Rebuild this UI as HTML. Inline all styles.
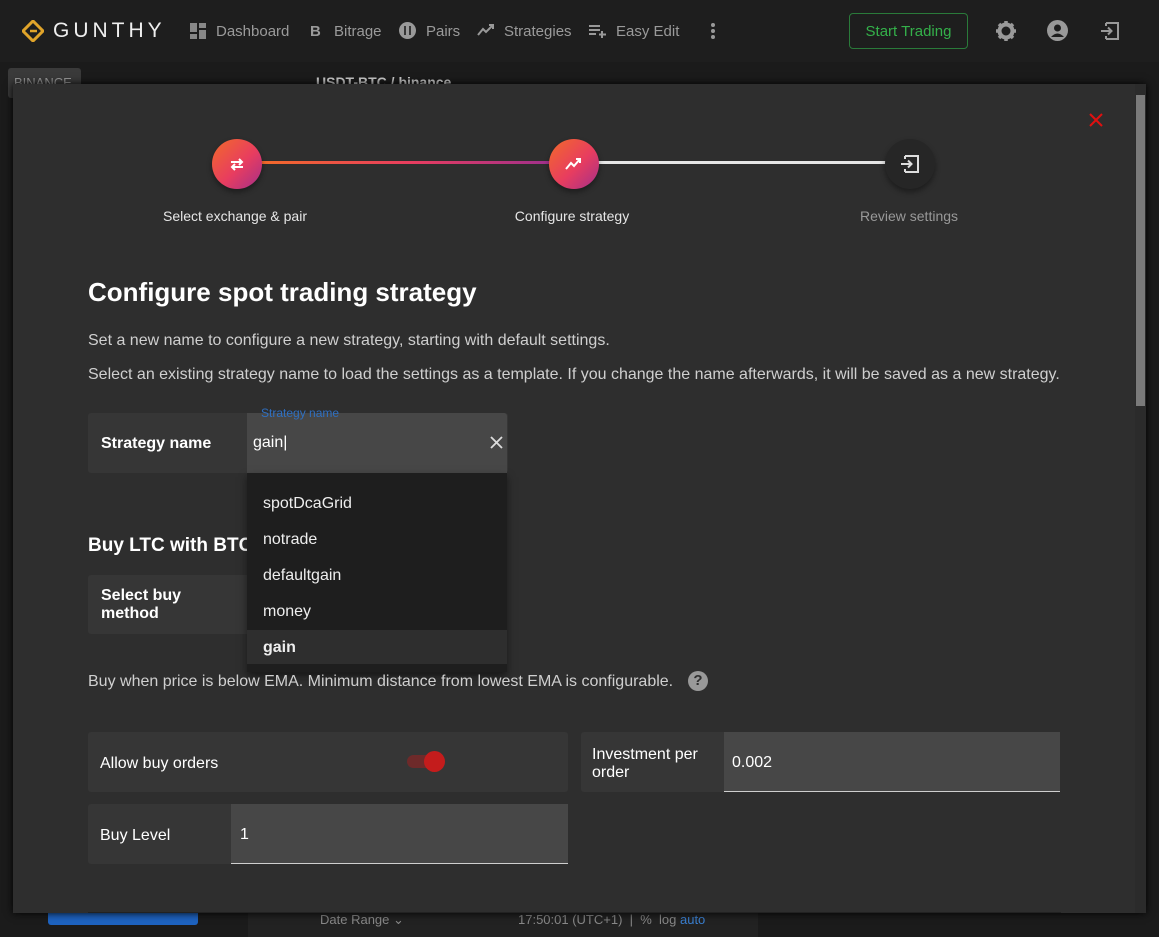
<!DOCTYPE html>
<html><head><meta charset="utf-8"><style>
*{box-sizing:border-box;margin:0;padding:0}
body{width:1159px;height:937px;background:#1b1b1b;font-family:"Liberation Sans",sans-serif;position:relative;overflow:hidden;color:#fff}
.nav{position:absolute;left:0;top:0;width:1159px;height:62px;background:#1e1e1e}
.ni{position:absolute;top:23px;font-size:15px;color:#9a9a9a}
.abs{position:absolute}
.modal{position:absolute;left:13px;top:84px;width:1133px;height:829px;background:#2e2e2e;box-shadow:0 0 8px #000}
.step{position:absolute;width:50px;height:50px;border-radius:50%;background:linear-gradient(135deg,#f26a2a,#e83d5f 55%,#a42f8a);box-shadow:0 3px 6px rgba(0,0,0,.4)}
.lbl{position:absolute;font-size:14px;color:#e6e6e6;text-align:center;width:200px}
.p{position:absolute;left:75px;font-size:16px;color:#cfcfcf}
.card{position:absolute;background:#363636;border-radius:3px}
.ct{position:absolute;font-size:16px;color:#fff}
.inp{position:absolute;background:#474747;border-bottom:1px solid #cfcfcf}
.dd{position:absolute;left:234px;top:389px;width:260px;height:199px;background:#1e1e1e;box-shadow:0 4px 8px rgba(0,0,0,.5)}
.dd div{height:36px;line-height:36px;padding-left:16px;font-size:16px;color:#eee}
</style></head><body>
<div class="nav">
<svg class="abs" style="left:22px;top:20px" width="22" height="22" viewBox="0 0 22 22"><path d="M11 1L21 11L11 21L1 11Z" fill="none" stroke="#e0a42a" stroke-width="3"/><path d="M8 11h7" stroke="#e0a42a" stroke-width="2.5"/></svg>
<div class="ni" style="left:53px;top:19px;font-size:21px;letter-spacing:4px;color:#eee">GUNTHY</div>
<svg class="abs" style="left:190px;top:23px" width="16" height="16"><rect x="0" y="0" width="7" height="9" fill="#888"/><rect x="9" y="0" width="7" height="5" fill="#888"/><rect x="0" y="11" width="7" height="5" fill="#888"/><rect x="9" y="7" width="7" height="9" fill="#888"/></svg>
<div class="ni" style="left:216px">Dashboard</div>
<div class="ni" style="left:310px;font-weight:bold">B</div>
<div class="ni" style="left:334px">Bitrage</div>
<svg class="abs" style="left:399px;top:22px" width="17" height="17"><circle cx="8.5" cy="8.5" r="8.5" fill="#999"/><path d="M6 4v9M11 4v9" stroke="#1e1e1e" stroke-width="1.6"/></svg>
<div class="ni" style="left:426px">Pairs</div>
<svg class="abs" style="left:477px;top:24px" width="18" height="12"><path d="M1 11L6 5l3 3 7-7M12 1h4v4" stroke="#999" stroke-width="2" fill="none"/></svg>
<div class="ni" style="left:504px">Strategies</div>
<svg class="abs" style="left:589px;top:24px" width="18" height="14"><path d="M0 2h11M0 6h11M0 10h7M13 7v7M10 10.5h7" stroke="#999" stroke-width="2"/></svg>
<div class="ni" style="left:616px">Easy Edit</div>
<svg class="abs" style="left:710px;top:22px" width="6" height="18"><circle cx="3" cy="3" r="2" fill="#999"/><circle cx="3" cy="9" r="2" fill="#999"/><circle cx="3" cy="15" r="2" fill="#999"/></svg>
<div class="abs" style="left:849px;top:13px;width:119px;height:36px;border:1px solid #2a7a3a;border-radius:4px;color:#34b04a;font-size:15px;text-align:center;line-height:35px">Start Trading</div>
<svg class="abs" style="left:996px;top:21px" width="20" height="20" viewBox="0 0 20 20"><circle cx="10" cy="10" r="6.5" fill="none" stroke="#999" stroke-width="4"/><path d="M10 0v5M10 15v5M0 10h5M15 10h5M3 3l3.5 3.5M13.5 13.5L17 17M17 3l-3.5 3.5M6.5 13.5L3 17" stroke="#999" stroke-width="3.5"/></svg>
<svg class="abs" style="left:1047px;top:20px" width="21" height="21"><circle cx="10.5" cy="10.5" r="10.5" fill="#999"/><circle cx="10.5" cy="8" r="3.5" fill="#1e1e1e"/><path d="M4 17q6.5-7 13 0" fill="#1e1e1e"/></svg>
<svg class="abs" style="left:1100px;top:21px" width="20" height="20"><path d="M6 2h12v16H6M6 5V2M6 15v3M1 10h10M8 6.5l3.5 3.5L8 13.5" stroke="#999" stroke-width="2" fill="none"/></svg>
</div>
<div class="abs" style="left:8px;top:68px;width:73px;height:30px;background:#3a3a3a;border-radius:3px;color:#999;font-size:13px;padding:7px 6px">BINANCE</div>
<div class="abs" style="left:316px;top:74px;color:#ccc;font-weight:bold;font-size:14px">USDT-BTC / binance</div>
<div class="abs" style="left:48px;top:905px;width:150px;height:20px;background:#1e63c0;border-radius:3px"></div>
<div class="abs" style="left:248px;top:913px;width:510px;height:24px;background:#222"></div>
<div class="abs" style="left:320px;top:912px;color:#888;font-size:13px">Date Range ⌄</div>
<div class="abs" style="left:518px;top:912px;color:#888;font-size:13px">17:50:01 (UTC+1) &nbsp;|&nbsp; % &nbsp;log <span style="color:#3a7fd0">auto</span></div>

<div class="modal">
<div class="abs" style="left:1122px;top:0;width:11px;height:829px;background:#2b2b2b"></div>
<div class="abs" style="left:1123px;top:11px;width:9px;height:311px;background:#7a7a7a"></div>
<svg class="abs" style="left:1076px;top:29px" width="14" height="14"><path d="M1 1L13 13M13 1L1 13" stroke="#e01010" stroke-width="2"/></svg>
<div class="abs" style="left:248px;top:77px;width:300px;height:3px;background:linear-gradient(90deg,#f26a2a,#e83d5f 50%,#9a2f8f)"></div>
<div class="abs" style="left:585px;top:77px;width:300px;height:3px;background:#e6e6e6"></div>
<div class="step" style="left:199px;top:55px"></div>
<svg class="abs" style="left:215px;top:71px" width="18" height="18"><path d="M3 7h11M11 4l3 3-3 3M15 12H4M7 9l-3 3 3 3" stroke="#fff" stroke-width="2" fill="none"/></svg>
<div class="step" style="left:536px;top:55px"></div>
<svg class="abs" style="left:552px;top:73px" width="18" height="14"><path d="M1 12l5-6 3 3 6-7M11 2h4v4" stroke="#fff" stroke-width="2" fill="none"/></svg>
<div class="abs" style="left:872px;top:55px;width:50px;height:50px;border-radius:50%;background:#262626;box-shadow:0 3px 6px rgba(0,0,0,.4)"></div>
<svg class="abs" style="left:887px;top:71px" width="20" height="18"><path d="M5 1h13v16H5M5 4V1M5 14v3M1 9h10M8 5.5l3.5 3.5L8 12.5" stroke="#ddd" stroke-width="2" fill="none"/></svg>
<div class="lbl" style="left:122px;top:124px">Select exchange &amp; pair</div>
<div class="lbl" style="left:459px;top:124px">Configure strategy</div>
<div class="lbl" style="left:796px;top:124px;color:#999">Review settings</div>
<div class="abs" style="left:75px;top:193px;font-size:26px;font-weight:bold">Configure spot trading strategy</div>
<div class="p" style="top:248px">Set a new name to configure a new strategy, starting with default settings.</div>
<div class="p" style="top:282px">Select an existing strategy name to load the settings as a template. If you change the name afterwards, it will be saved as a new strategy.</div>
<div class="card" style="left:75px;top:329px;width:420px;height:60px"></div>
<div class="ct" style="left:88px;top:351px;font-weight:bold">Strategy name</div>
<div class="abs" style="left:234px;top:329px;width:260px;height:60px;background:#474747;border-radius:0 3px 0 0"></div>
<div class="abs" style="left:248px;top:322px;font-size:12px;color:#2f6fc0">Strategy name</div>
<div class="ct" style="left:240px;top:350px">gain<span style="font-weight:100">|</span></div>
<svg class="abs" style="left:477px;top:352px" width="13" height="13"><path d="M1 1L12 12M12 1L1 12" stroke="#ddd" stroke-width="1.8"/></svg>
<div class="abs" style="left:75px;top:451px;font-size:19px;font-weight:bold">Buy LTC with BTC</div>
<div class="card" style="left:75px;top:491px;width:180px;height:59px"></div>
<div class="ct" style="left:88px;top:503px;font-weight:bold;line-height:18px">Select buy<br>method</div>
<div class="dd"><div style="margin-top:13px">spotDcaGrid</div><div>notrade</div><div>defaultgain</div><div>money</div><div style="background:#2e2e2e;font-weight:bold">gain</div></div>
<div class="p" style="top:589px;left:600px;clip-path:none"></div>
<div class="p" style="top:589px">Buy when price is below EMA. Minimum distance from lowest EMA is configurable.</div>
<div class="abs" style="left:234px;top:580px;width:260px;height:8px;background:#1e1e1e"></div>
<div class="abs" style="left:675px;top:587px;width:20px;height:20px;border-radius:50%;background:#999;color:#2e2e2e;font-weight:bold;font-size:15px;text-align:center;line-height:20px">?</div>
<div class="card" style="left:75px;top:648px;width:480px;height:60px"></div>
<div class="ct" style="left:87px;top:671px">Allow buy orders</div>
<div class="abs" style="left:394px;top:671px;width:30px;height:13px;border-radius:7px;background:#6e2a2a"></div>
<div class="abs" style="left:411px;top:667px;width:21px;height:21px;border-radius:50%;background:#c41c1c"></div>
<div class="card" style="left:568px;top:648px;width:479px;height:60px"></div>
<div class="ct" style="left:579px;top:662px;line-height:18px">Investment per<br>order</div>
<div class="inp" style="left:711px;top:648px;width:336px;height:60px"></div>
<div class="ct" style="left:719px;top:670px">0.002</div>
<div class="card" style="left:75px;top:720px;width:480px;height:60px"></div>
<div class="ct" style="left:87px;top:743px">Buy Level</div>
<div class="inp" style="left:218px;top:720px;width:337px;height:60px"></div>
<div class="ct" style="left:227px;top:742px">1</div>
<div class="abs" style="left:75px;top:828px;width:973px;height:1px;background:#222"></div>
</div>
</body></html>
